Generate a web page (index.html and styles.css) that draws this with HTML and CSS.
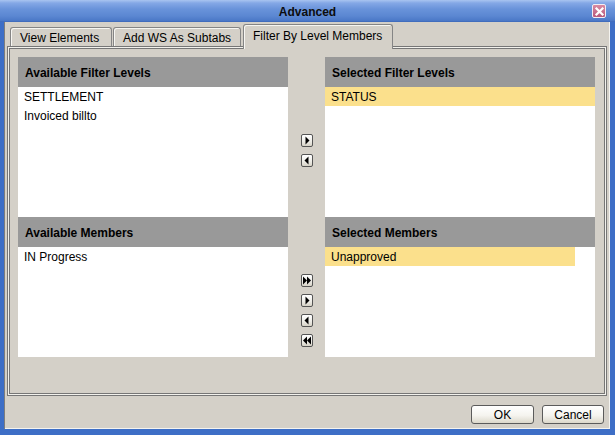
FILE: index.html
```html
<!DOCTYPE html>
<html>
<head>
<meta charset="utf-8">
<link rel="stylesheet" href="styles.css">
</head>
<body>
<div class="window">
  <div class="titlebar">
    <span></span>
    <span class="title">Advanced</span>
    <span class="close">
      <svg width="11" height="11" viewBox="0 0 11 11"><path d="M2.5 2.5 L8.5 8.5 M8.5 2.5 L2.5 8.5" stroke="#fff" stroke-width="2.2" stroke-linecap="square"/></svg>
    </span>
  </div>
  <div class="frame">
    <div class="tabs">
      <div class="tab">View Elements</div>
      <div class="tab tab2">Add WS As Subtabs</div>
      <div class="tab active">Filter By Level Members</div>
    </div>
    <div class="tabpanel">
      <div class="grid">
        <div class="section">
          <div class="header">Available Filter Levels</div>
          <div class="list">
            <div class="item">SETTLEMENT</div>
            <div class="item">Invoiced billto</div>
          </div>
        </div>
        <div class="mid mid-top">
          <button class="arrow"><svg width="10" height="11" viewBox="0 0 10 11"><polygon points="3.5,1.5 7.5,5.5 3.5,9.5" fill="#000"/></svg></button>
          <button class="arrow"><svg width="10" height="11" viewBox="0 0 10 11"><polygon points="6.5,1.5 2.5,5.5 6.5,9.5" fill="#000"/></svg></button>
        </div>
        <div class="section">
          <div class="header">Selected Filter Levels</div>
          <div class="list">
            <div class="item sel">STATUS</div>
          </div>
        </div>

        <div class="section">
          <div class="header">Available Members</div>
          <div class="list">
            <div class="item">IN Progress</div>
          </div>
        </div>
        <div class="mid mid-bottom">
          <button class="arrow"><svg width="10" height="11" viewBox="0 0 10 11"><polygon points="1,1.5 5,5.5 1,9.5" fill="#000"/><polygon points="5,1.5 9,5.5 5,9.5" fill="#000"/></svg></button>
          <button class="arrow"><svg width="10" height="11" viewBox="0 0 10 11"><polygon points="3.5,1.5 7.5,5.5 3.5,9.5" fill="#000"/></svg></button>
          <button class="arrow"><svg width="10" height="11" viewBox="0 0 10 11"><polygon points="6.5,1.5 2.5,5.5 6.5,9.5" fill="#000"/></svg></button>
          <button class="arrow"><svg width="10" height="11" viewBox="0 0 10 11"><polygon points="5,1.5 1,5.5 5,9.5" fill="#000"/><polygon points="9,1.5 5,5.5 9,9.5" fill="#000"/></svg></button>
        </div>
        <div class="section">
          <div class="header">Selected Members</div>
          <div class="list">
            <div class="item sel short">Unapproved</div>
          </div>
        </div>
      </div>
    </div>
    <div class="buttons">
      <button class="btn ok">OK</button>
      <button class="btn cancel">Cancel</button>
    </div>
  </div>
</div>
</body>
</html>
```
FILE: styles.css
```css
html, body {
  margin: 0;
  padding: 0;
}
body {
  font-family: "Liberation Sans", Arial, sans-serif;
  font-size: 12px;
  color: #000;
}
.window {
  width: 615px;
  height: 435px;
  display: flex;
  flex-direction: column;
  background: #3d6ec6;
}
.titlebar {
  height: 22px;
  flex: none;
  display: grid;
  grid-template-columns: 1fr auto 1fr;
  align-items: center;
  background: linear-gradient(180deg, #a9c4f0 0px, #84a8e6 3px, #6993da 9px, #5b87d2 16px, #4a77c6 21px, #3863b4 22px);
}
.title {
  font-weight: bold;
  color: #0d0d0d;
  font-size: 12px;
  padding-top: 1px;
}
.close {
  justify-self: end;
  margin-right: 9px;
  width: 14px;
  height: 14px;
  box-sizing: border-box;
  border: 1px solid #f2eef4;
  border-radius: 2px;
  background: linear-gradient(180deg, #d98aa2, #b85a7c);
  display: flex;
  align-items: center;
  justify-content: center;
}
.close svg { display: block; }
.frame {
  flex: 1;
  display: flex;
  flex-direction: column;
  background: #d4d0c8;
  border-left: 4px solid #3d6ec6;
  border-right: 5px solid #3d6ec6;
  border-bottom: 6px solid #3d6ec6;
  box-shadow: inset 1px 0 #7d7d7d, inset -1px 0 #f4f3ef, inset 0 -1px #f4f3ef;
}
.tabs {
  height: 24px;
  flex: none;
  display: flex;
  align-items: flex-end;
  padding-left: 6px;
}
.tab {
  height: 19px;
  box-sizing: border-box;
  padding: 1px 10px 0 9px;
  border: 1px solid #858585;
  border-bottom: none;
  border-radius: 3px 3px 0 0;
  box-shadow: inset 1px 1px #f7f6f2;
  background: #d4d0c8;
  display: flex;
  align-items: center;
  white-space: nowrap;
}
.tab2 {
  margin-left: 1px;
  width: 128px;
}
.tab:first-child { width: 102px; }
.tab.active {
  margin-left: 2px;
  width: 150px;
  height: 25px;
  margin-bottom: -3px;
  padding-bottom: 3px;
  padding-left: 9px;
  position: relative;
  z-index: 1;
}
.tabpanel {
  height: 350px;
  flex: none;
  box-sizing: border-box;
  margin: 0 3px 0 3px;
  border: 1px solid #767676;
  box-shadow: inset 0 0 0 1px #f2f1ec, inset 0 0 0 2px #767676;
  padding: 10px;
}
.grid {
  display: grid;
  grid-template-columns: 270px 37px 270px;
  grid-template-rows: 160px 140px;
}
.section {
  display: flex;
  flex-direction: column;
}
.header {
  height: 30px;
  flex: none;
  background: #999999;
  font-weight: bold;
  display: flex;
  align-items: center;
  padding-left: 7px;
  padding-top: 2px;
  box-sizing: border-box;
}
.list {
  flex: 1;
  background: #ffffff;
}
.item {
  height: 19px;
  line-height: 19px;
  padding-left: 6px;
  padding-top: 1px;
  box-sizing: border-box;
  white-space: nowrap;
}
.item.sel {
  background: #fbe08c;
}
.item.short {
  margin-right: 20px;
}
.mid {
  display: flex;
  flex-direction: column;
  align-items: center;
  gap: 7px;
}
.mid-top { padding-top: 77px; }
.mid-bottom { padding-top: 57px; }
.arrow {
  width: 12px;
  height: 13px;
  padding: 0;
  margin: 0;
  box-sizing: border-box;
  border: 1px solid #555;
  border-radius: 2px;
  background: linear-gradient(180deg, #ffffff, #ecebe5 60%, #d6d2c6);
  display: flex;
  align-items: center;
  justify-content: center;
}
.arrow svg { display: block; }
.buttons {
  flex: none;
  display: flex;
  justify-content: flex-end;
  gap: 8px;
  margin-top: 9px;
  padding-right: 6px;
}
.btn {
  height: 19px;
  box-sizing: border-box;
  padding: 0;
  margin: 0;
  border: 1px solid #5b5b5b;
  border-radius: 3px;
  background: linear-gradient(180deg, #ffffff, #f5f4ef 55%, #dcd8cb);
  font-family: "Liberation Sans", Arial, sans-serif;
  font-size: 12px;
  color: #000;
}
.ok { width: 63px; }
.cancel { width: 62px; }
```
